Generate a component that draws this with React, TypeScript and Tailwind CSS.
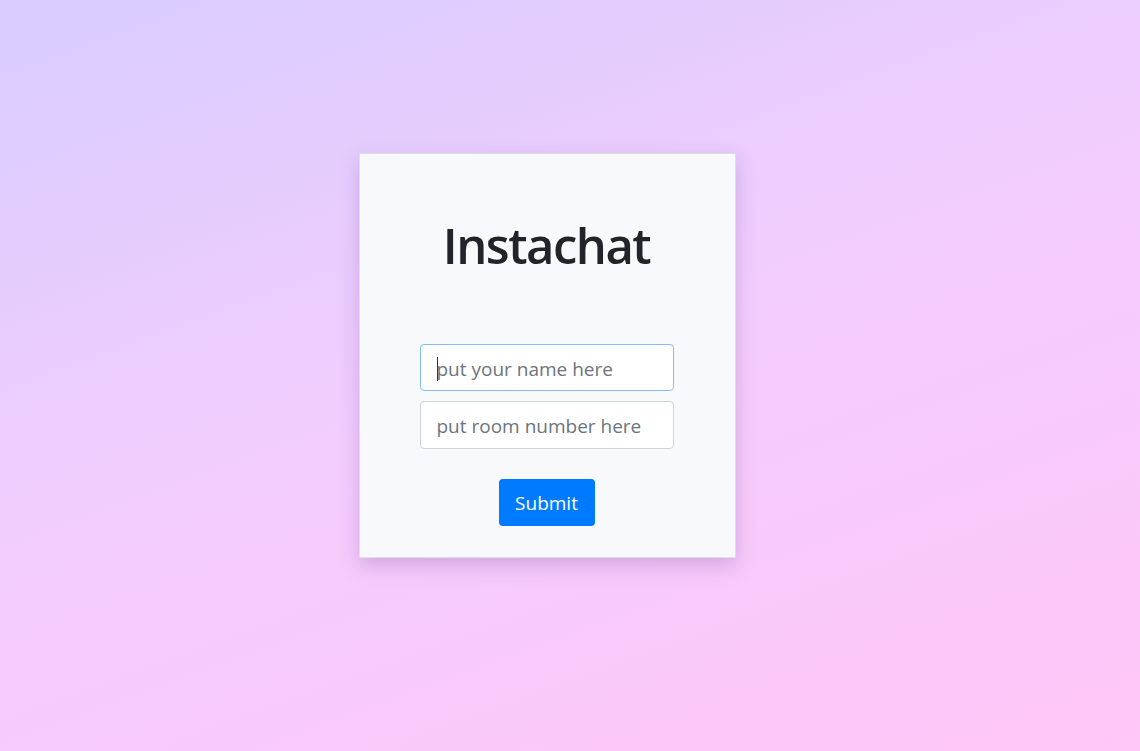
import React from "react";

export default function App() {
  return (
    <div
      className="w-full h-[751px] flex items-start justify-start bg-[linear-gradient(160deg,#d8ccff_0%,#f3cdfd_50%,#ffc6f7_100%)]"
      style={{ fontFamily: '"Open Sans", "Noto Sans", sans-serif' }}
    >
      <div className="mt-[153px] ml-[359px] w-[377px] h-[405px] pr-[2px] bg-[#f8f9fa] border border-[#dcdfe3] shadow-[0_8px_18px_rgba(120,60,160,0.25)] flex flex-col items-center">
        <h1 className="mt-[61px] text-[49px] leading-[60px] font-semibold tracking-[-1.5px] text-[#212529]">Instachat</h1>
        <div className="mt-[69px] w-[254px] flex flex-col gap-[10px]">
          <div className="h-[47px] rounded-[4px] border border-[#80bdff] bg-white flex items-center px-4 pt-[3px] text-[19px] text-[#6c757d]">
            <span className="w-px h-[24px] bg-[#333] mr-[-1px]" />
            <span>put your name here</span>
          </div>
          <div className="h-[48px] rounded-[4px] border border-[#ced4da] bg-white flex items-center px-4 pt-[3px] text-[19px] text-[#6c757d]">
            put room number here
          </div>
        </div>
        <button className="mt-[30px] w-[96px] h-[47px] pt-[2px] rounded-[4px] bg-[#007bff] text-white text-[19px]">
          Submit
        </button>
      </div>
    </div>
  );
}
